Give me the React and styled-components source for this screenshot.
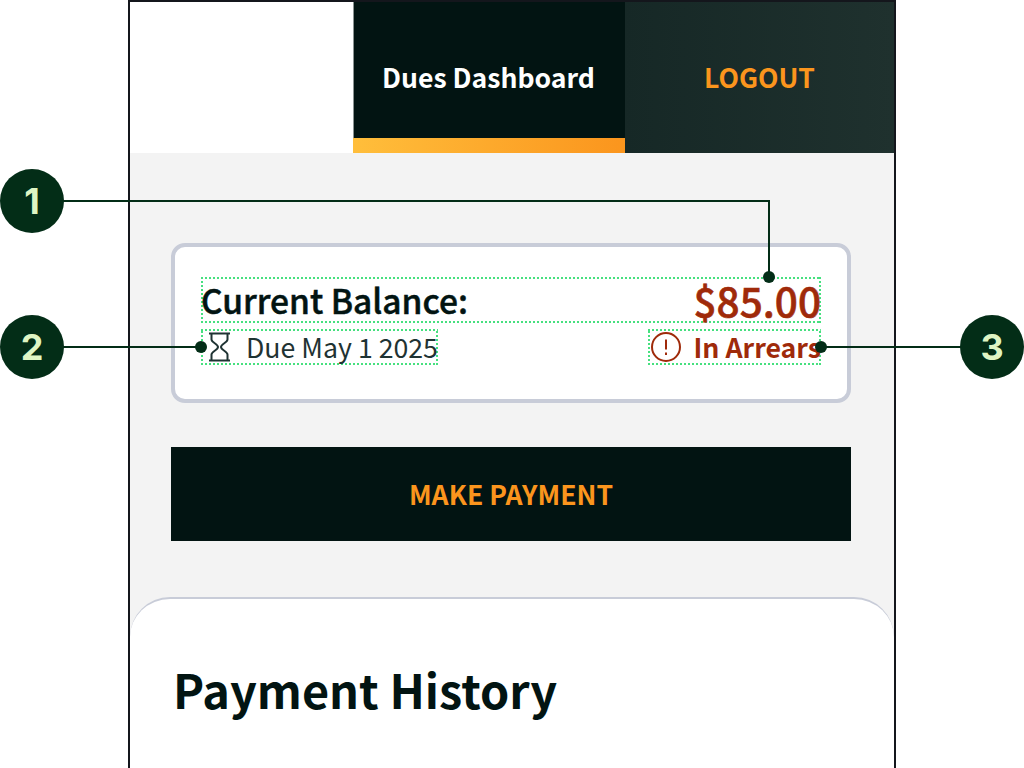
import React from 'react'
import styled, { createGlobalStyle, css } from 'styled-components'

const GlobalStyle = createGlobalStyle`
  html, body {
    margin: 0;
    padding: 0;
    background: #fff;
  }
  * {
    box-sizing: border-box;
  }
`

const dottedFrame = css`
  background-image:
    repeating-linear-gradient(90deg, #46e07f 0 2px, transparent 2px 4px),
    repeating-linear-gradient(90deg, #46e07f 0 2px, transparent 2px 4px),
    repeating-linear-gradient(0deg, #46e07f 0 2px, transparent 2px 4px),
    repeating-linear-gradient(0deg, #46e07f 0 2px, transparent 2px 4px);
  background-size: 100% 2px, 100% 2px, 2px 100%, 2px 100%;
  background-position: top, bottom, left, right;
  background-repeat: no-repeat;
`

const Stage = styled.div`
  position: relative;
  width: 1024px;
  height: 768px;
  overflow: hidden;
  background: #fff;
  font-family: "Noto Sans CJK SC", "Noto Sans", sans-serif;
`

const Phone = styled.div`
  width: 768px;
  height: 768px;
  margin: 0 auto;
  border: 2px solid #14161c;
  border-bottom: 0;
  display: flex;
  flex-direction: column;
  overflow: hidden;
  background: #f3f3f3;
`

const Header = styled.header`
  display: flex;
  flex: 0 0 151px;
  background: #fff;
`

const LogoSpace = styled.div`
  flex: 0 0 223px;
`

const ActiveTab = styled.div`
  flex: 0 0 272px;
  display: flex;
  align-items: center;
  justify-content: center;
  padding: 0 2px 3px 0;
  position: relative;
  background: #021412;
  border-left: 1px solid #8b9392;
  color: #fff;
  font-size: 26.6px;
  font-weight: 700;
  &::after {
    content: '';
    position: absolute;
    left: -1px;
    right: 0;
    bottom: 0;
    height: 15px;
    background: linear-gradient(90deg, #ffbe3b, #fb951d);
  }
`

const LogoutTab = styled.div`
  flex: 1;
  display: flex;
  align-items: center;
  justify-content: center;
  padding-bottom: 3px;
  background: linear-gradient(90deg, #162826, #1f312e);
  color: #fb951d;
  font-size: 26.6px;
  font-weight: 700;
`

const Main = styled.main`
  display: flex;
  flex-direction: column;
  padding: 90px 43px 0 41px;
`

const BalanceCard = styled.section`
  height: 160px;
  padding: 30px 26px 0 26px;
  background: #fff;
  border: 4px solid #c8ccd8;
  border-radius: 14px;
`

const Row = styled.div`
  ${dottedFrame}
  display: flex;
  justify-content: space-between;
  align-items: center;
  padding: 0 0 2px 0;
  height: ${p => p.$height}px;
`

const DetailRow = styled.div`
  display: flex;
  justify-content: space-between;
  margin-top: 6px;
`

const Detail = styled.div`
  ${dottedFrame}
  display: flex;
  align-items: center;
  height: 36px;
  gap: ${p => p.$gap}px;
  padding-left: ${p => p.$inset}px;
  color: ${p => p.$color};
  font-size: 26.7px;
  font-weight: ${p => p.$weight};
  line-height: 34px;
`

const DetailText = styled.span`
  margin-bottom: 1px;
`

const Label = styled.span`
  color: #021412;
  font-size: 33.5px;
  font-weight: 500;
  -webkit-text-stroke: 0.5px #021412;
`

const Amount = styled.span`
  color: #9f2a0a;
  font-size: 40.5px;
  font-weight: 500;
  -webkit-text-stroke: 0.6px #9f2a0a;
`

const PayButton = styled.button`
  height: 94px;
  margin-top: 44px;
  padding: 0 0 2px;
  border: 0;
  background: #021412;
  color: #fb951d;
  font-family: inherit;
  font-size: 26.6px;
  font-weight: 700;
`

const HistoryPanel = styled.section`
  height: 300px;
  margin: 56px -43px 0 -41px;
  padding: 62px 43px 0;
  background: #fff;
  border-top: 2px solid #c8ccd8;
  border-radius: 40px 40px 0 0;
`

const HistoryTitle = styled.h2`
  margin: 0;
  color: #021412;
  font-size: 46.8px;
  font-weight: 700;
  line-height: 1.2;
`

const Badge = styled.div`
  position: absolute;
  left: ${p => p.$x - 32}px;
  top: ${p => p.$y - 32}px;
  width: 64px;
  height: 64px;
  display: flex;
  align-items: center;
  justify-content: center;
  border-radius: 50%;
  background: #032d17;
  color: #dff5c4;
  font-family: "Inter", sans-serif;
  font-size: 36px;
  font-weight: 700;
`

const Leader = styled.div`
  position: absolute;
  left: ${p => p.$x}px;
  top: ${p => p.$y}px;
  width: ${p => p.$w}px;
  height: ${p => p.$h}px;
  background: #032d17;
`

const Dot = styled.div`
  position: absolute;
  left: ${p => p.$x - 6}px;
  top: ${p => p.$y - 6}px;
  width: 12px;
  height: 12px;
  border-radius: 50%;
  background: #032d17;
`

const HourglassIcon = () => (
  <svg width="24" height="30" viewBox="0 0 24 30" fill="none" stroke="#1f3333" strokeWidth="2">
    <path d="M1 1.5h21M1 28.5h21" />
    <path d="M3.5 1.5v6c0 3 6.5 4.5 6.5 7.5s-6.5 4.5-6.5 7.5v6M19.5 1.5v6c0 3-6.5 4.5-6.5 7.5s6.5 4.5 6.5 7.5v6" />
  </svg>
)

const AlertIcon = () => (
  <svg width="30" height="30" viewBox="0 0 30 30" fill="none" stroke="#9f2a0a" strokeWidth="2">
    <circle cx="15" cy="15" r="14" />
    <path d="M15 7.5v10M15 20.5v2.5" />
  </svg>
)

const App = () => (
  <Stage>
    <GlobalStyle />
    <Phone>
      <Header>
        <LogoSpace />
        <ActiveTab>Dues Dashboard</ActiveTab>
        <LogoutTab>LOGOUT</LogoutTab>
      </Header>
      <Main>
        <BalanceCard>
          <Row $height={46}>
            <Label>Current Balance:</Label>
            <Amount>$85.00</Amount>
          </Row>
          <DetailRow>
            <Detail $gap={14} $inset={7} $color="#1f3333" $weight={400}>
              <HourglassIcon />
              <DetailText>Due May 1 2025</DetailText>
            </Detail>
            <Detail $gap={12} $inset={3} $color="#9f2a0a" $weight={700}>
              <AlertIcon />
              <DetailText>In Arrears</DetailText>
            </Detail>
          </DetailRow>
        </BalanceCard>
        <PayButton>MAKE PAYMENT</PayButton>
        <HistoryPanel>
          <HistoryTitle>Payment History</HistoryTitle>
        </HistoryPanel>
      </Main>
    </Phone>
    <Leader $x={60} $y={200} $w={710} $h={2} />
    <Leader $x={768} $y={200} $w={2} $h={77} />
    <Dot $x={769} $y={277} />
    <Badge $x={32} $y={201}>1</Badge>
    <Leader $x={60} $y={346} $w={141} $h={2} />
    <Dot $x={201} $y={347} />
    <Badge $x={32} $y={347}>2</Badge>
    <Leader $x={821} $y={346} $w={145} $h={2} />
    <Dot $x={821} $y={347} />
    <Badge $x={992} $y={347}>3</Badge>
  </Stage>
)

export default App
